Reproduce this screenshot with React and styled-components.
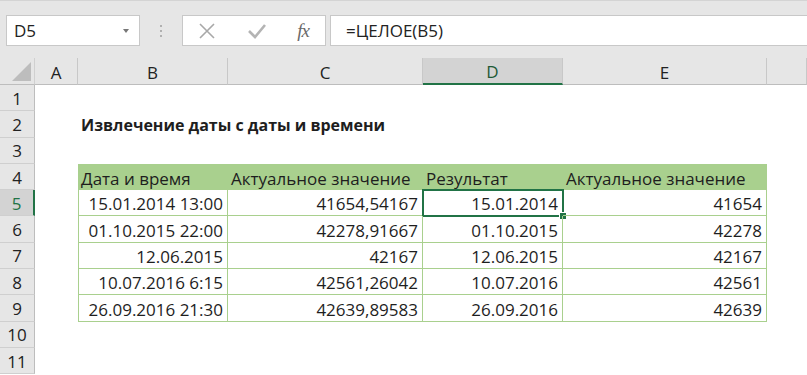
import styled, { createGlobalStyle } from 'styled-components'

const GlobalStyle = createGlobalStyle`
  html, body {
    margin: 0;
    padding: 0;
    background: #fff;
  }
  body {
    font-family: 'Open Sans', 'Noto Sans', sans-serif;
    color: #1e1e1e;
  }
`

const COLS = ['A', 'B', 'C', 'D', 'E', 'F']

const tableRows = [
  ['15.01.2014 13:00', '41654,54167', '15.01.2014', '41654'],
  ['01.10.2015 22:00', '42278,91667', '01.10.2015', '42278'],
  ['12.06.2015', '42167', '12.06.2015', '42167'],
  ['10.07.2016 6:15', '42561,26042', '10.07.2016', '42561'],
  ['26.09.2016 21:30', '42639,89583', '26.09.2016', '42639']
]

const headers = ['Дата и время', 'Актуальное значение', 'Результат', 'Актуальное значение']

const App = () => {
  const cellFor = (row, col) => {
    if (row === 2 && col === 'B') return <Cell key={col}><Title>Извлечение даты с даты и времени</Title></Cell>
    const idx = COLS.indexOf(col) - 1
    if (row === 4 && idx >= 0 && idx < 4) {
      return <Cell key={col} $head $first={idx === 0}>{headers[idx]}</Cell>
    }
    if (row >= 5 && row <= 9 && idx >= 0 && idx < 4) {
      return (
        <Cell key={col} $table $first={idx === 0} $right>
          {tableRows[row - 5][idx]}
          {row === 5 && col === 'D' && <Selection><Handle /></Selection>}
        </Cell>
      )
    }
    return <Cell key={col} />
  }

  return (
    <Page>
      <GlobalStyle />
      <TopBar>
        <NameBox>
          <span>D5</span>
          <Caret />
        </NameBox>
        <Grip>
          <i /><i /><i />
        </Grip>
        <IconBox>
          <svg width='20' height='20' viewBox='0 0 20 20'>
            <path d='M3 3 L17 17 M17 3 L3 17' stroke='#a8a8a8' strokeWidth='1.6' fill='none' />
          </svg>
          <svg width='22' height='20' viewBox='0 0 22 20'>
            <path d='M3 10 L9 16 L19 4' stroke='#b4b4b4' strokeWidth='2.6' fill='none' />
          </svg>
          <Fx>fx</Fx>
        </IconBox>
        <FormulaBox>=ЦЕЛОЕ(B5)</FormulaBox>
      </TopBar>
      <Sheet>
        <Corner>
          <svg width='19' height='19' viewBox='0 0 19 19'>
            <polygon points='19,0 19,19 0,19' fill='#bdbdbd' />
          </svg>
        </Corner>
        {COLS.map(c => (
          <ColHead key={c} $active={c === 'D'}>{c === 'F' ? '' : c}</ColHead>
        ))}
        {Array.from({ length: 11 }, (_, i) => i + 1).map(row => [
          <RowHead key={`h${row}`} $active={row === 5}>{row}</RowHead>,
          ...COLS.map(col => cellFor(row, col))
        ])}
      </Sheet>
    </Page>
  )
}

const Page = styled.div`
  width: 807px;
  height: 375px;
  overflow: hidden;
  background: #fff;
`

const TopBar = styled.div`
  display: flex;
  align-items: stretch;
  height: 31px;
  padding: 14px 0 12px 6px;
  background: #e6e6e6;
  border-top: 1px solid #d4d4d4;
`

const NameBox = styled.div`
  width: 134px;
  box-sizing: border-box;
  background: #fff;
  border: 1px solid #c8c8c8;
  display: flex;
  align-items: center;
  justify-content: space-between;
  padding: 0 10px 0 7px;
  font-size: 17px;
  color: #222;
`

const Caret = styled.span`
  width: 0;
  height: 0;
  border-left: 3.5px solid transparent;
  border-right: 3.5px solid transparent;
  border-top: 4px solid #777;
`

const Grip = styled.div`
  width: 42px;
  display: flex;
  flex-direction: column;
  align-items: center;
  justify-content: center;
  gap: 3px;

  i {
    width: 2px;
    height: 2px;
    background: #b0b0b0;
  }
`

const IconBox = styled.div`
  width: 144px;
  box-sizing: border-box;
  background: #fff;
  border: 1px solid #c8c8c8;
  display: flex;
  align-items: center;
  justify-content: space-between;
  padding: 0 16px 0 14px;
`

const Fx = styled.span`
  font-family: 'Liberation Serif', 'DejaVu Serif', serif;
  font-style: italic;
  font-size: 19px;
  color: #6a6a6a;
  letter-spacing: -1px;
`

const FormulaBox = styled.div`
  flex: 1;
  margin-left: 4px;
  background: #fff;
  border: 1px solid #c8c8c8;
  border-right: none;
  display: flex;
  align-items: center;
  padding-left: 15px;
  font-size: 17px;
  color: #222;
`

const Sheet = styled.div`
  display: grid;
  grid-template-columns: 35px 43px 150px 195px 140px 204px 1fr;
  grid-template-rows: 27px repeat(11, 26.3px);
  font-size: 17px;
`

const Corner = styled.div`
  background: #e6e6e6;
  border-bottom: 1px solid #bdbdbd;
  border-right: 1px solid #d0d0d0;
  display: flex;
  align-items: flex-end;
  justify-content: flex-end;
  padding: 0 3px 3px 0;
  box-sizing: border-box;
`

const ColHead = styled.div`
  background: ${({ $active }) => ($active ? '#d3d3d3' : '#e6e6e6')};
  border-bottom: ${({ $active }) => ($active ? '2px solid #217346' : '1px solid #bdbdbd')};
  border-right: 1px solid #c8c8c8;
  color: ${({ $active }) => ($active ? '#1e5a36' : '#222')};
  display: flex;
  align-items: center;
  justify-content: center;
  padding-top: 2px;
  box-sizing: border-box;
`

const RowHead = styled.div`
  background: ${({ $active }) => ($active ? '#d3d3d3' : '#e6e6e6')};
  border-bottom: 1px solid #cfcfcf;
  border-right: ${({ $active }) => ($active ? '2px solid #217346' : '1px solid #bdbdbd')};
  color: ${({ $active }) => ($active ? '#217346' : '#222')};
  display: flex;
  align-items: center;
  justify-content: center;
  padding-top: 1px;
  box-sizing: border-box;
`

const Cell = styled.div`
  position: relative;
  display: flex;
  align-items: center;
  justify-content: ${({ $right }) => ($right ? 'flex-end' : 'flex-start')};
  padding: 2px 4px 0 3px;
  white-space: nowrap;
  box-sizing: border-box;
  background: ${({ $head }) => ($head ? '#a9d08e' : 'transparent')};
  color: #1e1e1e;
  ${({ $table }) => $table && `
    border-right: 1px solid #a9d08e;
    border-bottom: 1px solid #a9d08e;
  `}
  ${({ $table, $first }) => $table && $first && `
    border-left: 1px solid #a9d08e;
  `}
`

const Title = styled.span`
  font-weight: bold;
  font-size: 16px;
`

const Selection = styled.div`
  position: absolute;
  left: -1px;
  top: -1px;
  right: -2px;
  bottom: -2px;
  border: 2px solid #217346;
  pointer-events: none;
`

const Handle = styled.div`
  position: absolute;
  right: -5px;
  bottom: -5px;
  width: 6px;
  height: 6px;
  background: #217346;
  border: 1px solid #fff;
`

export default App
